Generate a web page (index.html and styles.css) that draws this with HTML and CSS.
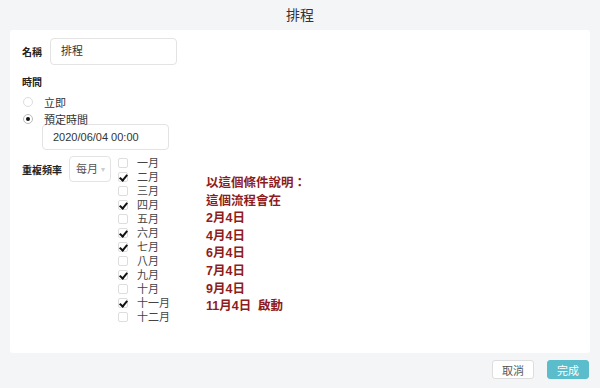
FILE: index.html
```html
<!DOCTYPE html>
<html lang="zh-Hant">

<head>
  <meta charset="UTF-8">
  <meta name="viewport" content="width=device-width, initial-scale=1.0">
  <title>排程</title>
  <link rel="stylesheet" href="styles.css">
</head>

<body>

  <div class="title">排程</div>

  <div class="card">
    <div class="row nameRow">
      <span class="label">名稱</span>
      <div class="field nameField">排程</div>
    </div>

    <div class="label timeLabel">時間</div>
    <div class="radio first"><span class="dot"></span>立即</div>
    <div class="radio"><span class="dot on"></span>預定時間</div>
    <div class="field dateField">2020/06/04 00:00</div>

    <div class="row repeatRow">
      <span class="label repeatLabel">重複頻率</span>
      <div class="field select">每月 <span class="caret">▾</span></div>

      <div class="months">
        <div class="month"><span class="box"></span>一月</div>
        <div class="month"><span class="box on"></span>二月</div>
        <div class="month"><span class="box"></span>三月</div>
        <div class="month"><span class="box on"></span>四月</div>
        <div class="month"><span class="box"></span>五月</div>
        <div class="month"><span class="box on"></span>六月</div>
        <div class="month"><span class="box on"></span>七月</div>
        <div class="month"><span class="box"></span>八月</div>
        <div class="month"><span class="box on"></span>九月</div>
        <div class="month"><span class="box"></span>十月</div>
        <div class="month"><span class="box on"></span>十一月</div>
        <div class="month"><span class="box"></span>十二月</div>
      </div>

      <!-- note -->
      <div class="note">
        以這個條件說明：<br>
        這個流程會在<br>
        2月4日<br>
        4月4日<br>
        6月4日<br>
        7月4日<br>
        9月4日<br>
        11月4日&nbsp;&nbsp;啟動
      </div>
    </div>
  </div>

  <div class="footer">
    <button class="btn">取消</button>
    <button class="btn primary">完成</button>
  </div>

</body>

</html>
```

FILE: styles.css
```css
body {
  margin: 0;
  background-color: #f4f5f7;
  font-family: "Liberation Sans", "Noto Sans CJK TC", sans-serif;
  font-size: 11px;
  color: #333;
}

.title {
  height: 30px;
  line-height: 31px;
  text-align: center;
  font-size: 14px;
  color: #333;
}

.card {
  margin: 0 10px;
  height: 323px;
  box-sizing: border-box;
  background: #fff;
  border-radius: 3px;
  padding: 8px 12px;
}

.row {
  display: flex;
  align-items: flex-start;
}

.label {
  font-weight: bold;
  font-size: 10px;
  color: #222;
}

.nameRow .label {
  margin-top: 6px;
  width: 28px;
}

.field {
  border: 1px solid #e3e3e3;
  border-radius: 4px;
  box-sizing: border-box;
  color: #333;
}

.nameField {
  width: 127px;
  height: 27px;
  line-height: 25px;
  padding-left: 10px;
}

.timeLabel {
  margin-top: 11px;
  line-height: 14px;
}

.radio {
  display: flex;
  align-items: center;
  height: 17px;
  color: #333;
}

.radio.first {
  margin-top: 3px;
}

.dot {
  width: 8px;
  height: 8px;
  border: 1px solid #ddd;
  border-radius: 50%;
  margin: 0 11px 0 1px;
  position: relative;
}

.dot.on {
  border-color: #bbb;
}

.dot.on::after {
  content: '';
  position: absolute;
  left: 2px;
  top: 2px;
  width: 4px;
  height: 4px;
  border-radius: 50%;
  background: #111;
}

.dateField {
  margin: -3px 0 0 20px;
  width: 127px;
  height: 26px;
  line-height: 24px;
  padding-left: 10px;
}

.repeatRow {
  margin-top: 6px;
}

.repeatLabel {
  margin-top: 6px;
  width: 47px;
}

.select {
  width: 42px;
  height: 26px;
  line-height: 24px;
  padding-left: 6px;
  color: #555;
}

.caret {
  color: #ccc;
  font-size: 8px;
  vertical-align: 1px;
}

.months {
  margin-left: 7px;
  margin-top: 0;
}

.month {
  display: flex;
  align-items: center;
  height: 14px;
  line-height: 14px;
  color: #444;
}

.box {
  width: 8px;
  height: 8px;
  border: 1px solid #ddd;
  border-radius: 2px;
  margin-right: 9px;
  position: relative;
}

.box.on::after {
  content: '';
  position: absolute;
  left: 2px;
  top: 0px;
  width: 3px;
  height: 6px;
  border: solid #111;
  border-width: 0 2px 2px 0;
  transform: rotate(40deg);
}

.note {
  margin-left: 36px;
  margin-top: 19px;
  color: #8e1c1c;
  font-weight: bold;
  font-size: 12.5px;
  line-height: 17.6px;
}

.footer {
  display: flex;
  justify-content: flex-end;
  gap: 13px;
  padding: 7px 11px 0 0;
}

.btn {
  font-family: "Noto Sans CJK TC", sans-serif;
  font-size: 11px;
  width: 42px;
  height: 19px;
  padding: 0;
  border: 1px solid #ddd;
  border-radius: 3px;
  background: #fff;
  color: #555;
}

.btn.primary {
  background: #5bbccb;
  border-color: #5bbccb;
  color: #fff;
}
```
